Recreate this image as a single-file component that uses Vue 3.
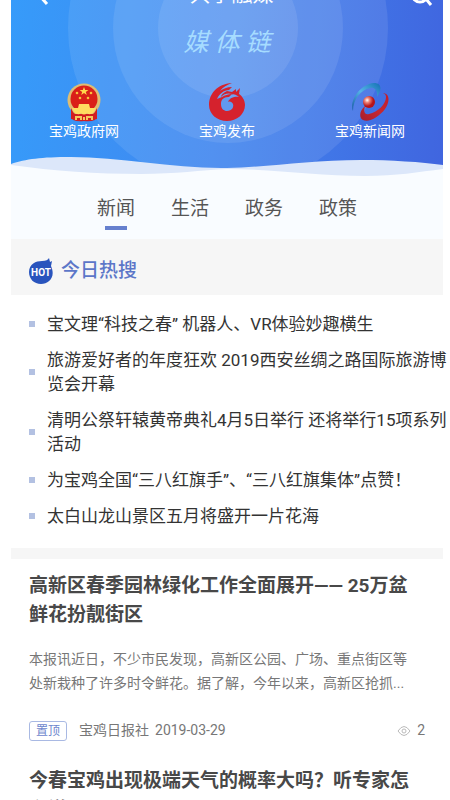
<script setup>
    import { ref } from 'vue';

    const tabs = ['新闻', '生活', '政务', '政策']
    let activeTab = ref(0)

    const hotList = [
        '宝文理“科技之春” 机器人、VR体验妙趣横生',
        '旅游爱好者的年度狂欢 2019西安丝绸之路国际旅游博览会开幕',
        '清明公祭轩辕黄帝典礼4月5日举行 还将举行15项系列活动',
        '为宝鸡全国“三八红旗手”、“三八红旗集体”点赞！',
        '太白山龙山景区五月将盛开一片花海',
    ]
</script>

<template>
    <div class="page">
        <header class="hero">
            <svg class="rings" viewBox="0 0 432 180" preserveAspectRatio="xMidYMin slice" aria-hidden="true">
                <circle cx="217" cy="28" r="160" />
                <circle cx="217" cy="28" r="115" />
                <circle cx="217" cy="28" r="70" />
            </svg>
            <div class="topBar">
                <button class="iconButton" aria-label="返回">
                    <svg width="24" height="24" viewBox="0 0 24 24"><path d="M17 3L8 12L17 22" /></svg>
                </button>
                <h1>共享融媒</h1>
                <button class="iconButton" aria-label="搜索">
                    <svg width="24" height="24" viewBox="0 0 24 24"><circle cx="11" cy="12" r="8" /><path d="M17 17L22 23" /></svg>
                </button>
            </div>
            <p class="slogan"><span>媒</span><span>体</span><span>链</span></p>
            <nav class="links">
                <a href="#">
                    <svg width="36" height="40" viewBox="0 0 36 40">
                        <path d="M6 25h24l-1 13q-5 2-11 1q-6 1-11-1z" fill="#d21e20" />
                        <circle cx="18" cy="18" r="16.500" fill="#dfbd72" />
                        <circle cx="18" cy="17" r="13.500" fill="#da2018" />
                        <path d="M18 5l1.200 3h3.200l-2.600 2l1 3l-2.800-1.900l-2.800 1.900l1-3l-2.600-2h3.200z" fill="#ffd84c" />
                        <g fill="#f9c23e"><circle cx="11" cy="11" r="1.300" /><circle cx="25" cy="11" r="1.300" /><circle cx="14" cy="16" r="1.300" /><circle cx="22" cy="16" r="1.300" /></g>
                        <path d="M5 26l3 6h20l3-6v11q-6 2-13 2t-13-2z" fill="#d21e20" />
                        <path d="M13 22h10l1 4h6l-2 4q-4 4-7 1q-3 3-6 0q-3 3-7-1l-2-4h6z" fill="#ffdd60" />
                        <path d="M10 38v-3h5v3M26 38v-3h-5v3M18 35v3" fill="none" stroke="#f5c65b" stroke-width="2" />
                    </svg>
                    <span>宝鸡政府网</span>
                </a>
                <a href="#">
                    <svg width="36" height="40" viewBox="0 0 36 40">
                        <path fill="#d5222d" fill-rule="evenodd" d="M23 1C8 2 0 12 0 23C0 32 8 39 18 39C28 39 36 32 36 23C36 18 33 14 30 12L31 6L27 10L27 7L23 10L18 9C14 11 12 13 12 15C15 11 20 11 23 12L20 15C14 15 12 18 12 22C12 27 15 29 18 29C23 29 25 25 24 22C23 20 21 19 19 20C20 17 24 14 30 15C25 10 18 12 13 15L8 17C10 12 15 8 20 8L23 5C18 5 14 7 11 9C14 5 18 3 23 1Z" />
                    </svg>
                    <span>宝鸡发布</span>
                </a>
                <a href="#">
                    <svg width="40" height="40" viewBox="0 0 40 40">
                        <defs>
                            <linearGradient id="blueArc" x1="0" y1="1" x2="1" y2="0"><stop offset="0" stop-color="#155aa0" /><stop offset="0.500" stop-color="#55b4e8" /><stop offset="1" stop-color="#1470b4" /></linearGradient>
                            <linearGradient id="redArc" x1="0" y1="1" x2="1" y2="0"><stop offset="0" stop-color="#a71d2c" /><stop offset="0.500" stop-color="#c52831" /><stop offset="1" stop-color="#c21c2c" /></linearGradient>
                            <radialGradient id="redBall" cx="0.350" cy="0.350"><stop offset="0" stop-color="#fff" /><stop offset="0.400" stop-color="#ee8577" /><stop offset="1" stop-color="#b71419" /></radialGradient>
                        </defs>
                        <path fill="url(#blueArc)" d="M3 29C-1 19 10 2 24 1C32 1 32 8 27 15C28 8 24 5 20 6C11 8 3 17 3 29Z" />
                        <path fill="url(#redArc)" d="M33 11C41 12 39 21 35 27C29 35 19 41 13 38C9 36 9 29 15 24C13 30 15 33 19 32C28 30 36 22 36 15Q36 12 33 11Z" />
                        <circle cx="19" cy="20" r="6" fill="url(#redBall)" />
                    </svg>
                    <span>宝鸡新闻网</span>
                </a>
            </nav>
            <svg class="wave" viewBox="0 0 432 24" preserveAspectRatio="none" aria-hidden="true">
                <path fill="#dce7fa" d="M0 8C15 3 30 1 60 1C110 1 165 13 216 12C260 11 300 4 350 4C380 4 410 6 432 9V24H0Z" />
                <path fill="#f9fcff" d="M0 9C43 15 85 18 130 18C165 18 190 14 216 13C260 13 306 20 354 20C386 20 407 16 432 13V24H0Z" />
            </svg>
        </header>

        <nav class="tabs">
            <button v-for="(tab, i) in tabs" :key="tab" :class="{ active: activeTab === i }" @click="activeTab = i">{{ tab }}</button>
        </nav>

        <section>
            <div class="hotTitle">
                <svg width="24" height="28" viewBox="0 0 24 28" aria-hidden="true">
                    <path fill="#2954bd" d="M12 27C5 27 0 22 0 15C0 7 7 4 13 4C17 4 19 3 20 1L21 5L23 4L22 9C27 20 20 27 12 27Z" />
                    <text x="12" y="19" text-anchor="middle">HOT</text>
                </svg>
                <h2>今日热搜</h2>
            </div>
            <ul class="hotList">
                <li v-for="item in hotList" :key="item"><a href="#">{{ item }}</a></li>
            </ul>
        </section>

        <article class="news">
            <h3>高新区春季园林绿化工作全面展开—— 25万盆鲜花扮靓街区</h3>
            <p class="summary">本报讯近日，不少市民发现，高新区公园、广场、重点街区等处新栽种了许多时令鲜花。据了解，今年以来，高新区抢抓...</p>
            <div class="meta">
                <span class="tag">置顶</span>
                <span>宝鸡日报社</span>
                <time>2019-03-29</time>
                <span class="views">
                    <svg width="14" height="12" viewBox="0 0 14 12"><path d="M1 6Q7 -3 13 6Q7 15 1 6Z" /><circle cx="7" cy="6" r="2" /></svg>
                    2
                </span>
            </div>
        </article>
        <article class="news">
            <h3>今春宝鸡出现极端天气的概率大吗？听专家怎么说</h3>
        </article>
    </div>
</template>

<style>
    body {
        margin: 0;
        background: white;
    }
</style>

<style scoped>
    .page {
        box-sizing: border-box;
        height: 100vh;
        overflow: hidden;
        padding: 0 7px 0 11px;
        font-family: Roboto, "Noto Sans CJK SC", sans-serif;
        color: #333;
    }

    h1, h2, h3, p, ul {
        margin: 0;
        padding: 0;
        font-weight: normal;
    }

    a {
        color: inherit;
        text-decoration: none;
    }

    button {
        padding: 0;
        border: none;
        background: none;
        font: inherit;
        color: inherit;
        cursor: pointer;
    }

    .hero {
        position: relative;
        display: flex;
        flex-direction: column;
        overflow: hidden;
        color: white;
        background: linear-gradient(95deg, #369bfa 0%, #4187ef 48%, #4065df 100%);
    }

    .rings {
        position: absolute;
        top: 0;
        left: 0;
        width: 100%;
        height: 100%;
        fill: white;
        fill-opacity: 0.09;
    }

    .topBar {
        position: relative;
        display: flex;
        justify-content: space-between;
        align-items: center;
        height: 24px;
        margin: -18px 10px 0 19px;
    }

    .topBar h1 {
        font-size: 21px;
        line-height: 24px;
    }

    .iconButton {
        display: flex;
    }

    .iconButton svg {
        fill: none;
        stroke: white;
        stroke-width: 3;
    }

    .slogan {
        position: relative;
        display: flex;
        justify-content: center;
        gap: 6px;
        margin-top: 14px;
        font-family: "Noto Sans CJK SC", sans-serif;
        font-size: 25px;
        font-style: italic;
        line-height: 40px;
        color: #a6dcff;
    }

    .links {
        position: relative;
        display: flex;
        justify-content: space-between;
        padding: 22px 38px 16px;
    }

    .links a {
        display: flex;
        flex-direction: column;
        align-items: center;
        font-size: 14px;
        line-height: 18px;
    }

    .wave {
        position: relative;
        display: block;
        width: 100%;
        height: 24px;
    }

    .tabs {
        display: flex;
        justify-content: center;
        gap: 36px;
        padding: 12px 0 9px;
        background: #f9fcff;
        font-size: 19px;
        line-height: 34px;
        color: #555;
    }

    .tabs button {
        display: flex;
        flex-direction: column;
        align-items: center;
    }

    .tabs button::after {
        content: "";
        width: 22px;
        height: 4px;
    }

    .tabs .active::after {
        background: #6680ce;
    }

    .hotTitle {
        display: flex;
        align-items: center;
        gap: 8px;
        padding: 18px 18px 10px;
        background: #f6f6f6;
    }

    .hotTitle text {
        font: bold 10px Roboto, sans-serif;
        fill: white;
    }

    .hotTitle h2 {
        font-size: 19px;
        font-weight: 500;
        line-height: 28px;
        color: #5c76c8;
    }

    .hotList {
        padding: 17px 0 8px 18px;
        list-style: none;
        border-bottom: 11px solid #f6f6f6;
    }

    .hotList li {
        display: flex;
        align-items: center;
        gap: 12px;
        margin: 0 -6px 12px 0;
        font-size: 17px;
        line-height: 24px;
    }

    .hotList li::before {
        content: "";
        flex: none;
        width: 6px;
        height: 6px;
        background: #b3c1e2;
    }

    .news {
        padding: 12px 18px 13px;
    }

    .news h3 {
        font-size: 19px;
        font-weight: bold;
        line-height: 29px;
        color: #484848;
    }

    .summary {
        margin: 18px 8px 0 0;
        font-size: 14px;
        line-height: 24px;
        color: #777;
    }

    .meta {
        display: flex;
        align-items: center;
        gap: 6px;
        margin-top: 25px;
        font-size: 14px;
        line-height: 21px;
        color: #777;
    }

    .tag {
        padding: 0 6px;
        margin-right: 6px;
        border: 1px solid #a9b9e3;
        border-radius: 3px;
        font-size: 12px;
        line-height: 18px;
        color: #6d86cd;
    }

    .views {
        display: flex;
        align-items: center;
        gap: 6px;
        margin-left: auto;
    }

    .views svg {
        fill: none;
        stroke: #bbb;
    }
</style>
